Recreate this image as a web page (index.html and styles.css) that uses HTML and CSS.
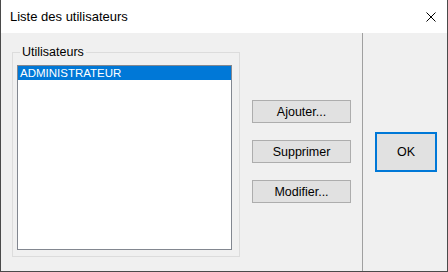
FILE: index.html
```html
<!DOCTYPE html>
<html>
  <head>
    <meta charset="utf-8">
    <title>Liste des utilisateurs</title>
    <link rel="stylesheet" href="styles.css">
  </head>
  <body>
    <div class="window">
      <div class="titlebar">
        <span class="title">Liste des utilisateurs</span>
        <svg class="close" width="10" height="10" viewBox="0 0 10 10">
          <path d="M0.5 0.5 L9.5 9.5 M9.5 0.5 L0.5 9.5" stroke="#000" stroke-width="1" fill="none"/>
        </svg>
      </div>
      <div class="content">
        <div class="main">
          <fieldset class="group">
            <legend>Utilisateurs</legend>
            <div class="listbox">
              <div class="item selected">ADMINISTRATEUR</div>
            </div>
          </fieldset>
          <div class="actions">
            <button class="btn">Ajouter...</button>
            <button class="btn">Supprimer</button>
            <button class="btn">Modifier...</button>
          </div>
        </div>
        <div class="side">
          <button class="btn btn-ok">OK</button>
        </div>
      </div>
    </div>
  </body>
</html>
```

FILE: styles.css
```css
body {
  margin: 0;
  font-family: "Liberation Sans", Arial, sans-serif;
  font-size: 12px;
  color: #000;
}

.window {
  width: 448px;
  height: 272px;
  box-sizing: border-box;
  border: 1px solid #4a4a4a;
  border-top: none;
  display: flex;
  flex-direction: column;
}

.titlebar {
  height: 33px;
  background: #fff;
  display: flex;
  align-items: center;
  justify-content: space-between;
  padding: 0 11px 0 9px;
}

.title {
  font-size: 13px;
}

.content {
  flex: 1;
  display: flex;
  background: #f0f0f0;
}

.main {
  width: 361px;
  display: flex;
  align-items: flex-start;
}

.group {
  margin: 12px 0 0 11px;
  padding: 6px 7px 6px 4px;
  width: 228px;
  height: 212px;
  box-sizing: border-box;
  border: 1px solid #dcdcdc;
}

.group legend {
  padding: 0 2px;
  margin-left: 3px;
  line-height: 14px;
  font-size: 12.5px;
}

.listbox {
  height: 185px;
  background: #fff;
  border: 1px solid #828790;
  box-sizing: border-box;
  padding: 0;
}

.item {
  font-size: 11.5px;
  height: 14px;
  line-height: 14px;
  padding-left: 2px;
}

.item.selected {
  background: #0078d7;
  color: #fff;
}

.actions {
  margin: 67px 0 0 12px;
  display: flex;
  flex-direction: column;
  gap: 17px;
}

.btn {
  font-family: "Liberation Sans", Arial, sans-serif;
  font-size: 12.5px;
  color: #000;
  width: 99px;
  height: 23px;
  background: #e1e1e1;
  border: 1px solid #adadad;
  padding: 0;
}

.side {
  flex: 1;
  border-left: 1px solid #a0a0a0;
  padding: 99px 0 0 12px;
}

.btn-ok {
  width: 62px;
  height: 40px;
  border: 2px solid #0078d7;
}
```
